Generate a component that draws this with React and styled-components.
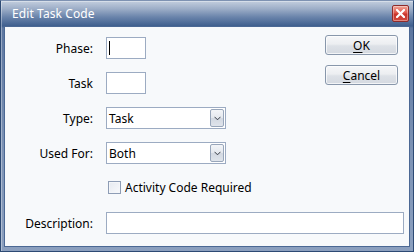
import React from "react";
import styled, { createGlobalStyle } from "styled-components";

const Global = createGlobalStyle`
  html, body { margin: 0; padding: 0; background: #ffffff; }
  body { font-family: "Noto Sans", "Open Sans", sans-serif; font-size: 12px; }
`;

const Window = styled.div`
  width: 414px;
  height: 252px;
  box-sizing: border-box;
  display: flex;
  flex-direction: column;
  background: linear-gradient(to bottom, #c3cede 0px, #9cadc7 8px, #6a84ab 16px, #3f5f8e 25px, #5d77a0 27px, #7d93b5 60%, #8b9fbe 100%);
  border: 1px solid #2d4a74;
  border-top-color: #7e92b2;
  box-shadow: inset 1px 1px 0 rgba(255,255,255,0.35);
`;

const TitleBar = styled.div`
  height: 25px;
  flex: none;
  display: flex;
  align-items: center;
  justify-content: space-between;
  padding: 0 4px 0 11px;
`;

const Title = styled.span`
  color: #ffffff;
  font-size: 12px;
  letter-spacing: 0.1px;
  margin-top: -1px;
`;

const CloseButton = styled.div`
  width: 15px;
  height: 15px;
  margin-top: -1px;
  border: 1px solid #8e2b2b;
  border-radius: 2px;
  background: linear-gradient(to bottom, #f0a79a 0%, #e0574a 45%, #c8332a 55%, #d24a3e 100%);
  display: flex;
  align-items: center;
  justify-content: center;
  box-shadow: inset 0 0 0 1px rgba(255,255,255,0.35);
`;

const Client = styled.div`
  flex: 1;
  margin: 0 3px 4px 3px;
  background: #f7f9fb;
  border: 1px solid #4b6894;
  display: flex;
  flex-direction: column;
  padding: 8px 5px 0 0;
`;

const TopSection = styled.div`
  display: flex;
  justify-content: space-between;
`;

const Fields = styled.div`
  display: flex;
  flex-direction: column;
  gap: 13px;
  padding-top: 2px;
`;

const Row = styled.div`
  display: flex;
  align-items: center;
  height: ${(p) => p.$h || 22}px;
  gap: 13px;
`;

const Label = styled.label`
  width: 88px;
  text-align: right;
  color: #000000;
  flex: none;
`;

const Spacer = styled.div`
  width: 88px;
  flex: none;
`;

const TextBox = styled.div`
  box-sizing: border-box;
  width: ${(p) => (p.$w ? `${p.$w}px` : "auto")};
  flex: ${(p) => (p.$w ? "none" : "1")};
  height: 22px;
  background: #ffffff;
  border: 1px solid #9cabc2;
  display: flex;
  align-items: center;
  padding-left: 2px;
`;

const Caret = styled.span`
  width: 1px;
  height: 14px;
  background: #000000;
`;

const Select = styled.div`
  box-sizing: border-box;
  width: 120px;
  height: 22px;
  background: #ffffff;
  border: 1px solid #9cabc2;
  display: flex;
  align-items: center;
  justify-content: space-between;
  padding: 1px 1px 1px 2px;
  color: #000000;
`;

const DropButton = styled.div`
  box-sizing: border-box;
  width: 14px;
  height: 18px;
  border: 1px solid #98a6ba;
  border-radius: 2px;
  background: linear-gradient(to bottom, #f3f5f8 0%, #e4e8ee 50%, #d2d8e1 51%, #dfe4eb 100%);
  display: flex;
  align-items: center;
  justify-content: center;
`;

const CheckLabel = styled.label`
  display: flex;
  align-items: center;
  gap: 4px;
  color: #000000;
  margin-left: 2px;
`;

const CheckBox = styled.span`
  box-sizing: border-box;
  width: 13px;
  height: 13px;
  border: 1px solid #8e9db5;
  background: linear-gradient(135deg, #e6eaf0 0%, #f8f9fb 100%);
  box-shadow: inset 0 0 0 1px #f4f6f9;
`;

const ButtonColumn = styled.div`
  display: flex;
  flex-direction: column;
  gap: 10px;
  margin-right: 6px;
`;

const Button = styled.button`
  box-sizing: border-box;
  width: 73px;
  height: 20px;
  padding: 0;
  border: 1px solid #8897ab;
  border-radius: 3px;
  background: linear-gradient(to bottom, #f6f7f9 0%, #eceef1 45%, #dde1e7 55%, #d4d9e0 100%);
  box-shadow: inset 0 0 0 1px rgba(255,255,255,0.7);
  font-family: inherit;
  font-size: 12px;
  color: #000000;
  line-height: 17px;
`;

const U = styled.span`
  text-decoration: underline;
  text-underline-offset: 2px;
`;

const DescRow = styled(Row)`
  margin-top: 15px;
`;

function Chevron() {
  return (
    <svg width="7" height="5" viewBox="0 0 7 5">
      <path d="M0.5 0.8 L3.5 3.8 L6.5 0.8" fill="none" stroke="#3a3f48" strokeWidth="1" />
    </svg>
  );
}

function CloseX() {
  return (
    <svg width="9" height="9" viewBox="0 0 9 9">
      <path d="M1 1 L8 8 M8 1 L1 8" stroke="#ffffff" strokeWidth="2.2" strokeLinecap="square" />
    </svg>
  );
}

export default function App() {
  return (
    <>
      <Global />
      <Window>
        <TitleBar>
          <Title>Edit Task Code</Title>
          <CloseButton>
            <CloseX />
          </CloseButton>
        </TitleBar>
        <Client>
          <TopSection>
            <Fields>
              <Row>
                <Label>Phase:</Label>
                <TextBox $w={40}>
                  <Caret />
                </TextBox>
              </Row>
              <Row>
                <Label>Task</Label>
                <TextBox $w={40} />
              </Row>
              <Row>
                <Label>Type:</Label>
                <Select>
                  <span>Task</span>
                  <DropButton>
                    <Chevron />
                  </DropButton>
                </Select>
              </Row>
              <Row>
                <Label>Used For:</Label>
                <Select>
                  <span>Both</span>
                  <DropButton>
                    <Chevron />
                  </DropButton>
                </Select>
              </Row>
              <Row $h={20}>
                <Spacer />
                <CheckLabel>
                  <CheckBox />
                  Activity Code Required
                </CheckLabel>
              </Row>
            </Fields>
            <ButtonColumn>
              <Button>
                <U>O</U>K
              </Button>
              <Button>
                <U>C</U>ancel
              </Button>
            </ButtonColumn>
          </TopSection>
          <DescRow>
            <Label>Description:</Label>
            <TextBox />
          </DescRow>
        </Client>
      </Window>
    </>
  );
}
